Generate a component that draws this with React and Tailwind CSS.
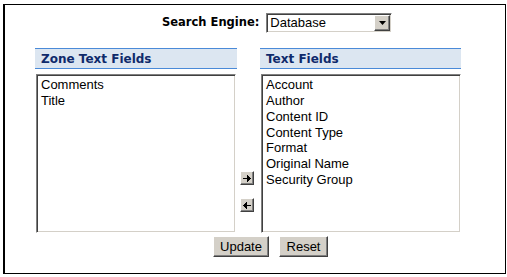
import React from "react";

const inset =
  "border border-t-[#808080] border-l-[#808080] border-b-[#ffffff] border-r-[#ffffff] shadow-[inset_1px_1px_0_#404040,inset_-1px_-1px_0_#d4d0c8]";
const outset =
  "bg-[#d4d0c8] border border-t-[#ffffff] border-l-[#ffffff] border-b-[#404040] border-r-[#404040] shadow-[inset_-1px_-1px_0_#808080,inset_1px_1px_0_#d4d0c8]";

function Header({ children }) {
  return (
    <div className="h-[21px] border-t border-b border-[#4a8ad8] bg-[#dce6f1] pl-[6px] flex items-center text-[#0f2a6b] font-bold text-[12px] leading-none [font-family:'DejaVu_Sans',Verdana,sans-serif]">
      {children}
    </div>
  );
}

function ListBox({ items }) {
  return (
    <div className={`ml-[1px] mt-[5px] w-[200px] h-[159px] bg-white ${inset} pl-[4px] pt-[2px]`}>
      {items.map((t) => (
        <div key={t} className="text-[13px] leading-[15.85px] text-black [font-family:'Liberation_Sans',Arial,sans-serif]">
          {t}
        </div>
      ))}
    </div>
  );
}

function ArrowBtn({ dir }) {
  return (
    <div className={`w-[14px] h-[14px] ${outset} flex items-center justify-center`}>
      <svg width="8" height="7" viewBox="0 0 8 7" shapeRendering="crispEdges">
        {dir === "right" ? (
          <path d="M0 3h4v-3h1v1h1v1h1v1h1v1h-1v1h-1v1h-1v1h-1v-3h-4z" fill="#000" />
        ) : (
          <path d="M8 3h-4v-3h-1v1h-1v1h-1v1h-1v1h1v1h1v1h1v1h1v-3h4z" fill="#000" />
        )}
      </svg>
    </div>
  );
}

export default function App() {
  return (
    <div className="w-[507px] h-[277px] bg-white pt-[4px] pl-[3px]">
      <div className="w-[503px] h-[270px] border border-black border-l-2">
        <div className="pt-[8px] pl-[157px] flex items-center">
          <span className="font-bold text-[11.5px] text-black [font-family:'DejaVu_Sans',Verdana,sans-serif] mr-[7px]">
            Search Engine:
          </span>
          <div className={`w-[126px] h-[20px] bg-white ${inset} flex items-center justify-between pl-[3px] pr-[1px]`}>
            <span className="text-[13px] text-black [font-family:'Liberation_Sans',Arial,sans-serif]">Database</span>
            <div className={`w-[16px] h-[16px] ${outset} flex items-center justify-center`}>
              <svg width="7" height="4" viewBox="0 0 7 4">
                <path d="M0 0h7l-3.5 4z" fill="#000" />
              </svg>
            </div>
          </div>
        </div>
        <div className="mt-[15px] pl-[30px] flex">
          <div className="w-[202px]">
            <Header>Zone Text Fields</Header>
            <ListBox items={["Comments", "Title"]} />
          </div>
          <div className="w-[22px] pt-[123px] pl-[3px] flex flex-col gap-[13px]">
            <ArrowBtn dir="right" />
            <ArrowBtn dir="left" />
          </div>
          <div className="w-[202px] pl-[1px]">
            <Header>Text Fields</Header>
            <ListBox
              items={[
                "Account",
                "Author",
                "Content ID",
                "Content Type",
                "Format",
                "Original Name",
                "Security Group",
              ]}
            />
          </div>
        </div>
        <div className="mt-[3px] pl-[208px] flex gap-[10px]">
          <button className={`w-[56px] h-[21px] ${outset} text-[13px] text-black [font-family:'Liberation_Sans',Arial,sans-serif] flex items-center justify-center`}>
            Update
          </button>
          <button className={`w-[49px] h-[21px] ${outset} text-[13px] text-black [font-family:'Liberation_Sans',Arial,sans-serif] flex items-center justify-center`}>
            Reset
          </button>
        </div>
      </div>
    </div>
  );
}
